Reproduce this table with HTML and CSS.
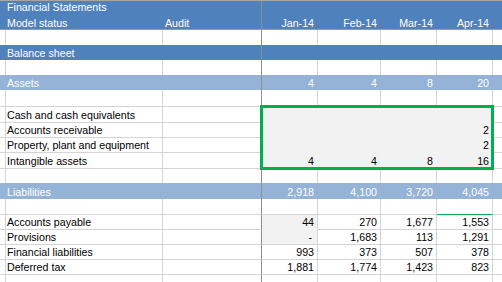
FILE: index.html
```html
<!DOCTYPE html>
<html>
<head>
<meta charset="utf-8">
<link rel="stylesheet" href="styles.css">
</head>
<body>
<div class="sheet">
  <div class="head">
    <div class="row hrow first">
      <div></div><div>Financial Statements</div><div class="fz"></div><div></div><div></div><div></div><div></div><div></div>
    </div>
    <div class="row hrow">
      <div></div><div>Model status</div><div class="fz">Audit</div><div class="n">Jan-14</div><div class="n">Feb-14</div><div class="n">Mar-14</div><div class="n">Apr-14</div><div></div>
    </div>
  </div>

  <div class="row"><div></div><div></div><div class="fz"></div><div></div><div></div><div></div><div></div><div></div></div>
  <div class="row band"><div></div><div>Balance sheet</div><div class="fz"></div><div></div><div></div><div></div><div></div><div></div></div>
  <div class="row"><div></div><div></div><div class="fz"></div><div></div><div></div><div></div><div></div><div></div></div>
  <div class="row band light"><div></div><div>Assets</div><div class="fz"></div><div class="n">4</div><div class="n">4</div><div class="n">8</div><div class="n">20</div><div></div></div>
  <div class="row lined h17"><div></div><div></div><div class="fz"></div><div></div><div></div><div></div><div></div><div></div></div>

  <div class="row lined h16"><div></div><div>Cash and cash equivalents</div><div class="fz"></div><div class="fill nr nb"></div><div class="fill nr nb"></div><div class="fill nr nb"></div><div class="fill nr nb"></div><div></div></div>
  <div class="row lined"><div></div><div>Accounts receivable</div><div class="fz"></div><div class="fill nr nb"></div><div class="fill nr nb"></div><div class="fill nr nb"></div><div class="fill nr nb n">2</div><div></div></div>
  <div class="row lined"><div></div><div>Property, plant and equipment</div><div class="fz"></div><div class="fill nr nb"></div><div class="fill nr nb"></div><div class="fill nr nb"></div><div class="fill nr nb n">2</div><div></div></div>
  <div class="row lined h16"><div></div><div>Intangible assets</div><div class="fz"></div><div class="fill nr n">4</div><div class="fill nr n">4</div><div class="fill nr n">8</div><div class="fill nr n">16</div><div></div></div>
  <div class="row h14"><div></div><div></div><div class="fz"></div><div></div><div></div><div></div><div></div><div></div></div>

  <div class="row band light h16"><div></div><div>Liabilities</div><div class="fz"></div><div class="n">2,918</div><div class="n">4,100</div><div class="n">3,720</div><div class="n">4,045</div><div></div></div>
  <div class="row lined h16"><div></div><div></div><div class="fz"></div><div></div><div></div><div></div><div class="gline"></div><div></div></div>

  <div class="row lined"><div></div><div>Accounts payable</div><div class="fz"></div><div class="fill nb n">44</div><div class="n">270</div><div class="n">1,677</div><div class="n">1,553</div><div></div></div>
  <div class="row lined"><div></div><div>Provisions</div><div class="fz"></div><div class="fill n dash">-</div><div class="n">1,683</div><div class="n">113</div><div class="n">1,291</div><div></div></div>
  <div class="row lined"><div></div><div>Financial liabilities</div><div class="fz"></div><div class="n">993</div><div class="n">373</div><div class="n">507</div><div class="n">378</div><div></div></div>
  <div class="row lined"><div></div><div>Deferred tax</div><div class="fz"></div><div class="n">1,881</div><div class="n">1,774</div><div class="n">1,423</div><div class="n">823</div><div></div></div>
  <div class="row lined"><div></div><div></div><div class="fz"></div><div></div><div></div><div></div><div></div><div></div></div>

  <div class="selection"></div>
</div>
</body>
</html>
```

FILE: styles.css
```css
body {
  margin: 0;
  background: #ffffff;
  font-family: "Liberation Sans", Arial, sans-serif;
  font-size: 10.67px;
  color: #000000;
  overflow: hidden;
}

.sheet {
  position: relative;
  width: 502px;
  height: 282px;
  overflow: hidden;
}

.row {
  display: grid;
  grid-template-columns: 5px 158px 99px 56px 63px 56px 56px 10px;
  height: 15px;
}

.row > div {
  box-sizing: border-box;
  border-right: 1px solid #d4d4d4;
  display: flex;
  align-items: flex-end;
  padding: 0 3px 1px 2px;
  line-height: 12px;
  white-space: nowrap;
}

.h14 { height: 14px; }
.h16 { height: 16px; }
.h17 { height: 17px; }

.lined > div {
  border-bottom: 1px solid #d4d4d4;
}

.n {
  justify-content: flex-end;
}

.dash {
  padding-right: 5px !important;
}

/* header block */
.head {
  border-top: 1px solid #a6a6a6;
  border-bottom: 1px solid #9a9a9a;
  background: #4f81bd;
  color: #ffffff;
}

.hrow {
  height: 14px;
}

.hrow > div {
  border-right-color: transparent;
  padding-bottom: 0;
}

.hrow.first > div {
  padding-bottom: 2px;
}

/* coloured section bands */
.band {
  background: #4f81bd;
  color: #ffffff;
}

.band.light {
  background: #95b3d7;
}

.band > div {
  border-right-color: transparent;
}

/* frozen-pane divider */
.row > .fz {
  border-right-color: #8e8e8e;
}

/* filled input cells */
.fill {
  background: #f2f2f2;
}

.nr {
  border-right-color: #f2f2f2 !important;
}

.nb {
  border-bottom-color: #f2f2f2 !important;
}

.gline {
  border-bottom-color: #00b050 !important;
}

/* selection outline */
.selection {
  position: absolute;
  left: 260px;
  top: 105px;
  width: 234px;
  height: 65px;
  box-sizing: border-box;
  border: 3px solid #00b050;
  pointer-events: none;
}
```
